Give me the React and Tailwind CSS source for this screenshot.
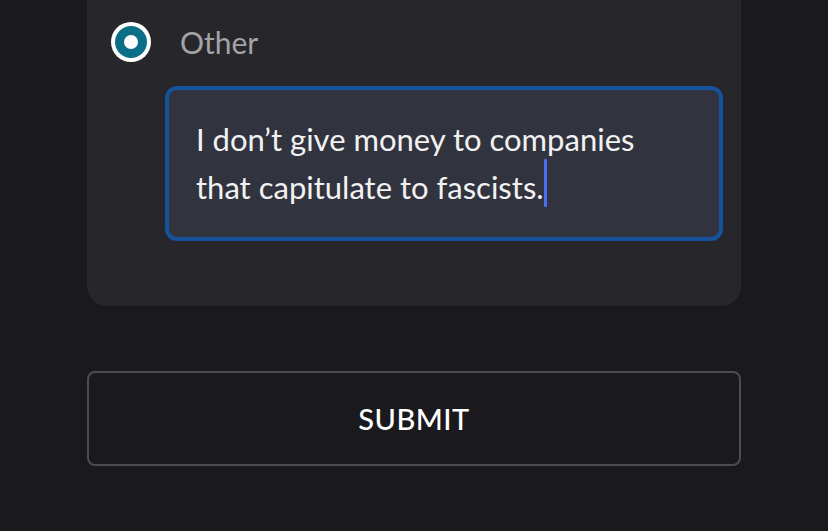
export default function App() {
  return (
    <div
      className="w-[828px] h-[531px] bg-[#1a191e] overflow-hidden px-[87px]"
      style={{ fontFamily: '"Lato", "Open Sans", sans-serif' }}
    >
      <div className="bg-[#26262b] rounded-b-[20px] pt-[22px] pb-[65px] pl-[24px] pr-[18px]">
        <div className="flex items-center h-[40px]">
          <div className="w-[40px] h-[40px] rounded-full bg-white flex items-center justify-center">
            <div className="w-[32px] h-[32px] rounded-full bg-[#0b6f87] flex items-center justify-center">
              <div className="w-[14px] h-[14px] rounded-full bg-white" />
            </div>
          </div>
          <span className="ml-[29px] text-[30px] text-[#a3a3a8] leading-none">Other</span>
        </div>
        <div className="mt-[24px] ml-[54px] border-[4px] border-[#15539c] rounded-[12px] bg-[#31343e] px-[27px] pt-[25px] pb-[26px]">
          <p className="h-[96px] text-[31px] leading-[48px] text-[#f2f2f2] w-[470px]">
            I don’t give money to companies that capitulate to fascists.
            <span className="relative -top-[5px] -mt-[6px] inline-block w-[3px] h-[48px] bg-[#4d6cf5] align-middle rounded-[1px]" />
          </p>
        </div>
      </div>
      <button className="mt-[65px] w-full h-[95px] border-2 border-[#4b4b55] rounded-[8px] bg-transparent text-white text-[29px] font-medium tracking-[0.5px]">
        SUBMIT
      </button>
    </div>
  );
}
